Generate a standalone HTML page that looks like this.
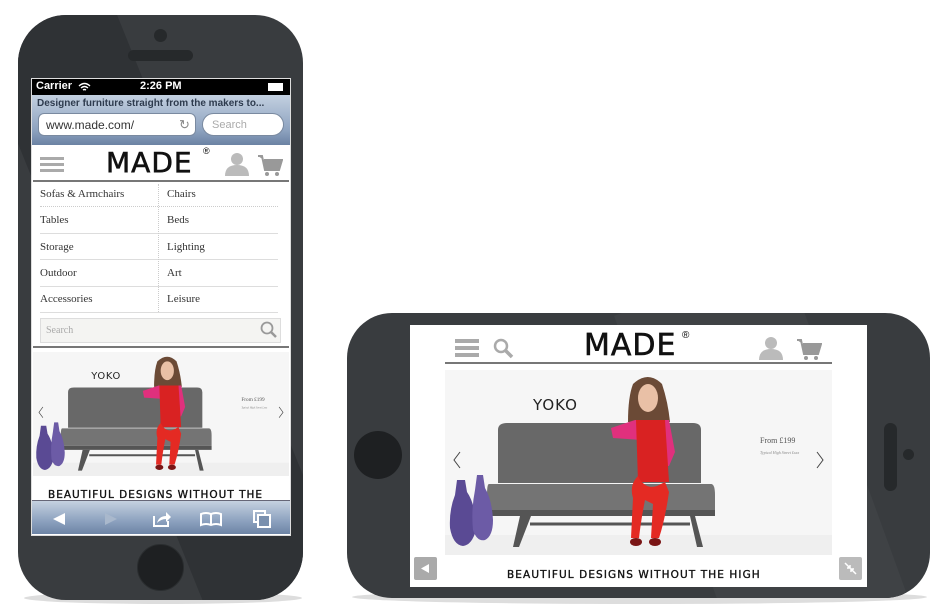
<!DOCTYPE html>
<html><head><meta charset="utf-8"><style>
*{margin:0;padding:0;box-sizing:border-box}
html,body{width:950px;height:615px;overflow:hidden}
body{background:#fff;position:relative;font-family:"Liberation Sans",sans-serif}
.a{position:absolute}
.made{font-family:"DejaVu Sans","Liberation Sans",sans-serif;font-weight:normal;color:#111;-webkit-text-stroke:0.6px #111;letter-spacing:1px}
.tag{font-family:"DejaVu Sans","Liberation Sans",sans-serif;color:#111;-webkit-text-stroke:0.35px #111;white-space:nowrap}
.menu div{position:absolute;font-family:"Liberation Serif",serif;font-size:11px;color:#333}
</style></head><body>

<div class="a" style="left:24px;top:592px;width:278px;height:12px;border-radius:50%;background:#ddd"></div>
<div class="a" style="left:352px;top:590px;width:575px;height:14px;border-radius:50%;background:#ddd"></div>

<div class="a" style="left:18px;top:15px;width:285px;height:585px;border-radius:48px;background:#393c3f;overflow:hidden">
 <div class="a" style="left:-60px;top:-20px;width:140px;height:700px;background:#2f3235;transform:rotate(-22deg);transform-origin:0 0"></div>
</div>
<div class="a" style="left:154px;top:29px;width:13px;height:13px;border-radius:50%;background:#26292b"></div>
<div class="a" style="left:128px;top:50px;width:65px;height:11px;border-radius:6px;background:#26292b"></div>
<div class="a" style="left:137px;top:544px;width:47px;height:47px;border-radius:50%;background:#1e2022;border:1px solid #2a2d2f"></div>

<div class="a" style="left:31px;top:78px;width:260px;height:458px;background:#fff;border:1px solid #ddd;overflow:hidden"></div>
<div class="a" style="left:32px;top:79px;width:258px;height:16px;background:#000;color:#fff;font-size:11px;font-weight:bold">
 <span class="a" style="left:4px;top:1px">Carrier</span>
 <svg class="a" style="left:46px;top:3px" width="13" height="10"><path d="M1 4Q6.5-1 12 4M3 6Q6.5 3 10 6M5 8Q6.5 7 8 8" stroke="#fff" stroke-width="1.4" fill="none"/></svg>
 <span class="a" style="left:108px;top:1px">2:26 PM</span>
 <div class="a" style="left:236px;top:4px;width:15px;height:8px;border:1px solid #fff;background:#fff"></div>
</div>
<div class="a" style="left:32px;top:95px;width:258px;height:50px;background:linear-gradient(#c3d0e0,#8ea3c0 70%,#6b82a3)">
 <div class="a" style="left:5px;top:3px;font-size:10px;font-weight:bold;color:#2e3b4e;white-space:nowrap">Designer furniture straight from the makers to...</div>
 <div class="a" style="left:6px;top:18px;width:158px;height:23px;background:#fff;border-radius:6px;border:1px solid #7a8aa0;font-size:12px;color:#333;padding:4px 0 0 7px">www.made.com/<span class="a" style="left:140px;top:3px;color:#888;font-size:13px">↻</span></div>
 <div class="a" style="left:170px;top:18px;width:82px;height:23px;background:#fff;border-radius:12px;border:1px solid #7a8aa0;font-size:11px;color:#aaa;padding:5px 0 0 9px">Search</div>
</div>
<div class="a" style="left:40px;top:157px;width:24px;height:3px;background:#aaa;box-shadow:0 6px 0 #aaa,0 12px 0 #aaa"></div>
<div class="a made" style="left:106px;top:147px;font-size:28px;line-height:32px">MADE</div>
<div class="a" style="left:203px;top:146px;font-size:9px">®</div>
<svg class="a" style="left:224px;top:152px" width="26" height="24"><circle cx="13" cy="7" r="6" fill="#bbb"/><path d="M1 24Q1 13 13 13Q25 13 25 24Z" fill="#bbb"/></svg>
<svg class="a" style="left:257px;top:153px" width="26" height="24"><path d="M1 3H5L8 17H22L25 7H7" fill="#999" stroke="#999" stroke-width="2"/><circle cx="10" cy="21" r="2" fill="#999"/><circle cx="20" cy="21" r="2" fill="#999"/></svg>
<div class="a" style="left:33px;top:180px;width:256px;height:2px;background:#777"></div>
<div class="menu">
 <div style="left:40px;top:188px">Sofas &amp; Armchairs</div><div style="left:167px;top:188px">Chairs</div>
 <div style="left:40px;top:214px">Tables</div><div style="left:167px;top:214px">Beds</div>
 <div style="left:40px;top:241px">Storage</div><div style="left:167px;top:241px">Lighting</div>
 <div style="left:40px;top:267px">Outdoor</div><div style="left:167px;top:267px">Art</div>
 <div style="left:40px;top:293px">Accessories</div><div style="left:167px;top:293px">Leisure</div>
</div>
<div class="a" style="left:40px;top:206px;width:238px;height:1px;border-top:1px dotted #ccc;box-shadow:0 27px 0 #ddd,0 53px 0 #ddd,0 80px 0 #ddd,0 106px 0 #ddd"></div>
<div class="a" style="left:158px;top:184px;width:1px;height:128px;border-left:1px dotted #ccc"></div>
<div class="a" style="left:40px;top:318px;width:241px;height:25px;background:#f4f4f2;border:1px solid #ddd;font-family:'Liberation Serif',serif;font-size:10px;color:#aaa;padding:6px 0 0 5px">Search</div>
<svg class="a" style="left:260px;top:321px" width="18" height="18"><circle cx="7" cy="7" r="5.5" stroke="#999" stroke-width="1.8" fill="none"/><path d="M11 11L16 16" stroke="#999" stroke-width="2.5"/></svg>
<div class="a" style="left:33px;top:346px;width:256px;height:2px;background:#777"></div>

<svg width="0" height="0" style="position:absolute"><defs>
<g id="hero">
 <rect width="387" height="185" fill="#f6f6f6"/>
 <rect y="165" width="387" height="20" fill="#efefef"/>
 <path d="M53 60Q53 53 62 53H248Q256 53 256 60V113H53Z" fill="#686868"/>
 <path d="M44 114H266Q270 114 270 125V140H42V125Q42 114 44 114Z" fill="#747474"/>
 <path d="M42 140H270V146H42Z" fill="#555"/>
 <path d="M75 146L68 177H74L86 146ZM245 146L252 177H258L250 146Z" fill="#555"/>
 <path d="M85 154H245" stroke="#555" stroke-width="3"/>
 <path d="M12 110L10 125Q4 140 5 158Q8 175 18 176Q27 175 31 160Q31 135 22 122L20 110Z" fill="#5a4a94"/>
 <path d="M32 105L30 120Q26 140 28 160Q32 172 40 170Q48 166 48 150Q47 130 40 118L38 105Z" fill="#6c5ba6"/>
 <path d="M188 14Q203 0 217 14Q223 32 225 52H183Q183 27 188 14Z" fill="#6b4a36"/>
 <ellipse cx="203" cy="28" rx="10" ry="14" fill="#e9c0a6"/>
 <path d="M166 58L190 50H224L230 82L224 96H202L196 70L168 68Z" fill="#e0307d"/>
 <path d="M191 50H220L224 112H193Z" fill="#d92222"/>
 <path d="M193 106Q200 120 212 116L220 112L224 122Q220 150 214 168L206 168L208 134L200 130Q196 150 194 168H186L188 128Q184 115 193 106Z" fill="#e42a23"/>
 <ellipse cx="191" cy="172" rx="6" ry="4" fill="#7a1515"/><ellipse cx="210" cy="172" rx="6" ry="4" fill="#7a1515"/>
 <text x="88" y="40" font-family="DejaVu Sans,sans-serif" font-size="15" fill="#222" letter-spacing="1">YOKO</text>
 <text x="315" y="73" font-family="Liberation Serif,serif" font-size="8" fill="#555">From £199</text>
 <text x="315" y="84" font-family="Liberation Serif,serif" font-size="4" fill="#888" font-style="italic">Typical High Street £xxx</text>
 <path d="M15 82L9 90L15 98M372 82L378 90L372 98" stroke="#444" stroke-width="1" fill="none"/>
</g></defs></svg>

<svg class="a" style="left:33px;top:352px" width="256" height="124" viewBox="0 0 387 185" preserveAspectRatio="none"><use href="#hero"/></svg>
<div class="a tag" style="left:48px;top:489px;font-size:10.5px;letter-spacing:1px">BEAUTIFUL DESIGNS WITHOUT THE</div>
<div class="a" style="left:32px;top:500px;width:258px;height:34px;background:linear-gradient(#c5d1e0,#8da2bf 60%,#6d84a5);border-top:1px solid #667">
 <svg class="a" style="left:20px;top:11px" width="14" height="14"><path d="M1 7L13 1V13Z" fill="#fff"/></svg>
 <svg class="a" style="left:72px;top:11px" width="14" height="14"><path d="M13 7L1 1V13Z" fill="#a9b8cc"/></svg>
 <svg class="a" style="left:120px;top:9px" width="20" height="18"><path d="M2 6V16H16V11" stroke="#fff" stroke-width="2" fill="none"/><path d="M5 13Q7 6 14 6V2L19 7L14 12V9Q9 9 5 13Z" fill="#fff"/></svg>
 <svg class="a" style="left:168px;top:10px" width="22" height="16"><path d="M1 3Q6 1 11 3Q16 1 21 3V14Q16 12 11 14Q6 12 1 14Z M11 3V14" stroke="#fff" stroke-width="2" fill="none"/></svg>
 <svg class="a" style="left:221px;top:9px" width="18" height="18"><rect x="1" y="1" width="11" height="11" stroke="#fff" stroke-width="2" fill="none"/><rect x="5" y="5" width="12" height="12" stroke="#fff" stroke-width="2" fill="#7a90ae"/></svg>
</div>

<div class="a" style="left:347px;top:313px;width:583px;height:285px;border-radius:45px;background:#393c3f;overflow:hidden">
 <div class="a" style="left:330px;top:-40px;width:180px;height:400px;background:#3f4245;transform:rotate(-20deg)"></div>
</div>
<div class="a" style="left:354px;top:431px;width:48px;height:48px;border-radius:50%;background:#1e2022"></div>
<div class="a" style="left:884px;top:423px;width:13px;height:68px;border-radius:7px;background:#26292b"></div>
<div class="a" style="left:903px;top:449px;width:11px;height:11px;border-radius:50%;background:#26292b"></div>
<div class="a" style="left:410px;top:325px;width:457px;height:262px;background:#fff"></div>
<div class="a" style="left:455px;top:339px;width:24px;height:4px;background:#aaa;box-shadow:0 7px 0 #aaa,0 14px 0 #aaa"></div>
<svg class="a" style="left:493px;top:338px" width="22" height="22"><circle cx="8" cy="8" r="6" stroke="#aaa" stroke-width="2.5" fill="none"/><path d="M12 12L19 19" stroke="#aaa" stroke-width="3.5"/></svg>
<div class="a made" style="left:584px;top:329px;font-size:30px;line-height:34px">MADE</div>
<div class="a" style="left:682px;top:330px;font-size:10px">®</div>
<svg class="a" style="left:758px;top:336px" width="26" height="24"><circle cx="13" cy="7" r="6" fill="#bbb"/><path d="M1 24Q1 13 13 13Q25 13 25 24Z" fill="#bbb"/></svg>
<svg class="a" style="left:796px;top:337px" width="26" height="24"><path d="M1 3H5L8 17H22L25 7H7" fill="#999" stroke="#999" stroke-width="2"/><circle cx="10" cy="21" r="2" fill="#999"/><circle cx="20" cy="21" r="2" fill="#999"/></svg>
<div class="a" style="left:445px;top:362px;width:387px;height:2px;background:#777"></div>
<svg class="a" style="left:445px;top:370px" width="387" height="185" viewBox="0 0 387 185"><use href="#hero"/></svg>
<div class="a" style="left:414px;top:557px;width:23px;height:23px;background:#aaa;border-radius:2px"><svg width="23" height="23"><path d="M7 11.5L15 7V16Z" fill="#fff"/></svg></div>
<div class="a" style="left:839px;top:557px;width:23px;height:23px;background:#bbb;border-radius:2px"><svg width="23" height="23"><path d="M6 6L11 11M17 17L12 12M11 8V11H8M12 15V12H15" stroke="#fff" stroke-width="1.5" fill="none"/></svg></div>
<div class="a tag" style="left:507px;top:569px;font-size:10.5px;letter-spacing:1.1px">BEAUTIFUL DESIGNS WITHOUT THE HIGH</div>
</body></html>
